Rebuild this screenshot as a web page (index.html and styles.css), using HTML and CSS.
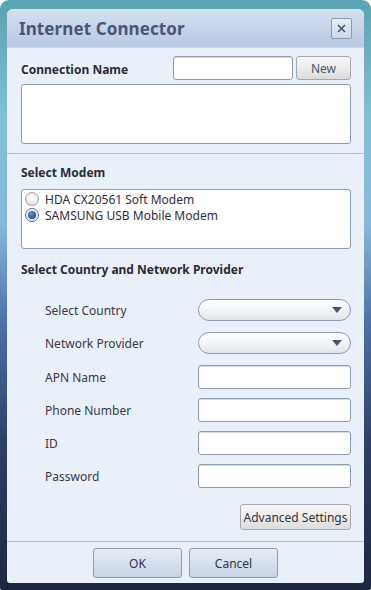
FILE: index.html
```html
<!DOCTYPE html>
<html>
<head>
    <title>Internet Connector</title>
    <link rel="stylesheet" href="styles.css">
</head>
<body>
    <div class="frame">
        <div class="window">
            <div class="titlebar">
                <h1>Internet Connector</h1>
                <button class="close" type="button" aria-label="Close">
                    <svg width="9" height="9" viewBox="0 0 9 9"><path d="M1 1L8 8M8 1L1 8" stroke="#4a5470" stroke-width="1.6"/></svg>
                </button>
            </div>

            <div class="section top">
                <div class="name-row">
                    <label class="heading">Connection Name</label>
                    <input class="field name-input" type="text">
                    <button class="btn new-btn" type="button">New</button>
                </div>
                <div class="box conn-list"></div>
            </div>

            <div class="section middle">
                <div class="heading modem-title">Select Modem</div>
                <div class="box modem-list">
                    <div class="radio-item"><span class="radio"></span>HDA CX20561 Soft Modem</div>
                    <div class="radio-item"><span class="radio checked"></span>SAMSUNG USB Mobile Modem</div>
                </div>

                <div class="heading provider-title">Select Country and Network Provider</div>

                <div class="form">
                    <div class="form-row combo-row">
                        <label>Select Country</label>
                        <div class="combo"><span class="arrow"></span></div>
                    </div>
                    <div class="form-row combo-row">
                        <label>Network Provider</label>
                        <div class="combo"><span class="arrow"></span></div>
                    </div>
                    <div class="form-row">
                        <label>APN Name</label>
                        <input class="field" type="text">
                    </div>
                    <div class="form-row">
                        <label>Phone Number</label>
                        <input class="field" type="text">
                    </div>
                    <div class="form-row">
                        <label>ID</label>
                        <input class="field" type="text">
                    </div>
                    <div class="form-row last">
                        <label>Password</label>
                        <input class="field" type="password">
                    </div>
                </div>

                <div class="advanced">
                    <button class="btn adv-btn" type="button">Advanced Settings</button>
                </div>
            </div>

            <div class="footer">
                <button class="btn footer-btn" type="button">OK</button>
                <button class="btn footer-btn" type="button">Cancel</button>
            </div>
        </div>
    </div>
</body>
</html>
```

FILE: styles.css
```css
html, body {
    margin: 0;
    padding: 0;
    background: #ffffff;
}
body {
    font-family: "Noto Sans", "Open Sans", sans-serif;
    font-size: 12px;
    color: #333340;
    width: 371px;
    height: 590px;
    overflow: hidden;
}
.frame {
    box-sizing: border-box;
    width: 371px;
    height: 590px;
    padding: 9px 7px 7px 7px;
    border-radius: 9px 9px 2px 2px;
    background: linear-gradient(180deg, #5aa3b2 0%, #7fc0d4 20%, #86b8dc 38%, #4c6fa6 55%, #2e3f66 75%, #1e2740 100%);
}
.window {
    height: 100%;
    display: flex;
    flex-direction: column;
    background: #eaf0f9;
    border-radius: 6px 6px 3px 3px;
    overflow: hidden;
}
.titlebar {
    box-sizing: border-box;
    height: 39px;
    flex: none;
    display: flex;
    align-items: center;
    justify-content: space-between;
    padding: 0 12px 0 12px;
    background: linear-gradient(180deg, #d6e0f0 0%, #c6d4ea 50%, #b9c9e3 100%);
    border-bottom: 1px solid #c9d5e6;
}
.titlebar h1 {
    margin: 0;
    font-size: 17px;
    font-weight: bold;
    color: #4c5479;
    letter-spacing: 0.1px;
}
.close {
    width: 21px;
    height: 21px;
    padding: 0;
    border: 1px solid #8a99b2;
    border-radius: 2px;
    background: linear-gradient(180deg, #e6edf7, #ccd8ea);
    display: flex;
    align-items: center;
    justify-content: center;
}
.heading {
    font-weight: bold;
    color: #2b2b38;
}
.section {
    padding: 0 13px 0 14px;
}
.top {
    flex: none;
    padding-top: 8px;
    padding-bottom: 9px;
    border-bottom: 1px solid #b3c0d4;
}
.name-row {
    display: flex;
    align-items: center;
    height: 24px;
}
.name-row label {
    flex: 1;
    padding-top: 2px;
}
.field {
    box-sizing: border-box;
    height: 24px;
    border: 1px solid #8e9cb2;
    border-radius: 3px;
    background: #ffffff;
    box-shadow: inset 0 1px 0 #d8dde5;
    font: inherit;
    padding: 0 4px;
}
.name-input {
    width: 120px;
}
.btn {
    box-sizing: border-box;
    font: inherit;
    color: #333344;
    border: 1px solid #a3a9b2;
    border-radius: 3px;
    background: linear-gradient(180deg, #f7f7f7 0%, #ececec 50%, #dcdcdc 100%);
    padding: 0;
}
.new-btn {
    width: 55px;
    height: 24px;
    margin-left: 3px;
    color: #4a5370;
}
.box {
    box-sizing: border-box;
    border: 1px solid #8e9cb2;
    border-radius: 3px;
    background: #ffffff;
}
.conn-list {
    height: 60px;
    margin-top: 4px;
}
.middle {
    flex: 1;
    padding-top: 10px;
}
.modem-title {
    height: 18px;
    line-height: 18px;
}
.modem-list {
    height: 60px;
    margin-top: 7px;
    padding-top: 1px;
}
.radio-item {
    display: flex;
    align-items: center;
    height: 16px;
    color: #2e2e3c;
}
.radio {
    box-sizing: border-box;
    width: 14px;
    height: 14px;
    border-radius: 50%;
    border: 1px solid #9aa0a8;
    background: radial-gradient(circle at 50% 40%, #ffffff 0%, #e4e6ea 70%, #cfd2d8 100%);
    margin: 0 6px 0 3px;
    display: flex;
    align-items: center;
    justify-content: center;
}
.radio.checked {
    border-color: #5d7aa8;
    background: radial-gradient(circle at 50% 40%, #ffffff 0%, #c9d9ef 100%);
}
.radio.checked::after {
    content: "";
    width: 8px;
    height: 8px;
    border-radius: 50%;
    background: radial-gradient(circle at 40% 35%, #6b8fd0 0%, #2c4f94 70%, #1d3b78 100%);
}
.provider-title {
    margin-top: 10px;
    height: 22px;
    line-height: 22px;
}
.form {
    margin-top: 18px;
    padding-left: 24px;
}
.form-row {
    display: flex;
    align-items: center;
    justify-content: space-between;
    height: 24px;
    margin-bottom: 9px;
}
.form-row.last {
    margin-bottom: 0;
}
.combo-row {
    height: 22px;
    margin-bottom: 11px;
}
.form-row label {
    color: #383846;
}
.form-row .field {
    width: 153px;
}
.combo {
    box-sizing: border-box;
    width: 153px;
    height: 22px;
    border: 1px solid #8e9cb2;
    border-radius: 11px;
    background: linear-gradient(180deg, #ffffff 0%, #f2f4f7 50%, #e1e5eb 100%);
    display: flex;
    align-items: center;
    justify-content: flex-end;
    padding-right: 8px;
}
.arrow {
    width: 0;
    height: 0;
    border-left: 5px solid transparent;
    border-right: 5px solid transparent;
    border-top: 6px solid #4a5670;
}
.advanced {
    display: flex;
    justify-content: flex-end;
    margin-top: 16px;
}
.adv-btn {
    width: 111px;
    height: 26px;
}
.footer {
    flex: none;
    height: 42px;
    border-top: 1px solid #b3c0d4;
    display: flex;
    justify-content: center;
    gap: 7px;
    padding-top: 6px;
    box-sizing: border-box;
}
.footer-btn {
    width: 89px;
    height: 30px;
    border-color: #8e9cb2;
    background: linear-gradient(180deg, #e7edf6 0%, #d6e0ee 50%, #c8d4e6 100%);
}
```
